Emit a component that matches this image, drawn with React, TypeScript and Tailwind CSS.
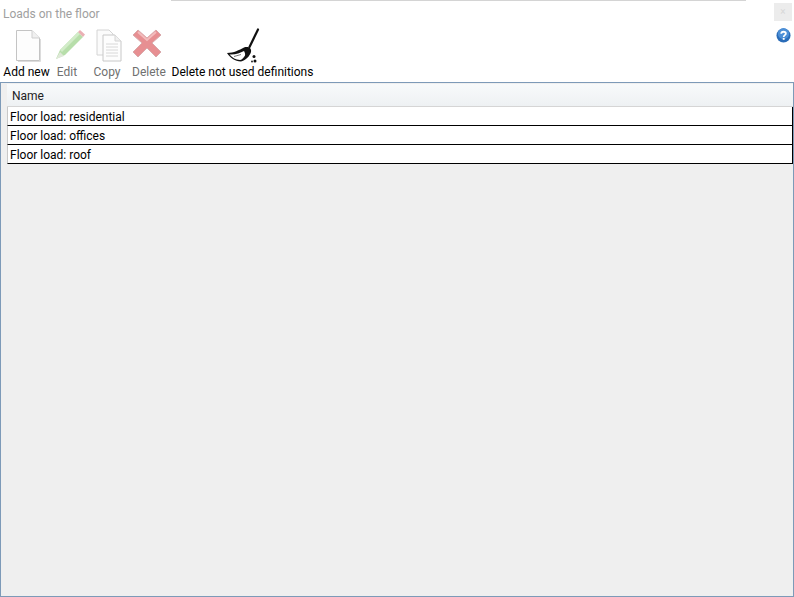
import { ReactNode } from 'react';

const rows = ['Floor load: residential', 'Floor load: offices', 'Floor load: roof'];

function ToolButton({ icon, label, muted, className }: { icon: ReactNode; label: string; muted?: boolean; className: string }) {
  return (
    <div className={`flex flex-col items-center ${className}`}>
      <div className="flex h-[37px] items-start justify-center">{icon}</div>
      <span className={`mt-[1px] whitespace-nowrap text-[12px] leading-[16px] ${muted ? 'text-[#707070]' : 'text-black'}`}>{label}</span>
    </div>
  );
}

function PageIcon() {
  return (
    <svg className="ml-[2px] mt-[3px] shrink-0" width="28" height="34" viewBox="0 0 28 34">
      <path d="M2.5 1.5H18L25.5 9V31.5H2.5Z" fill="#fdfdfd" stroke="#c4c4c4" />
      <path d="M18 1.5V9H25.5" fill="#f0f0f0" stroke="#cfcfcf" />
      <path d="M26.5 10V32.5H4" fill="none" stroke="#dcdcdc" />
    </svg>
  );
}

function PencilIcon() {
  return (
    <svg className="ml-[6px] mt-[2px] shrink-0" width="32" height="34" viewBox="0 0 32 34">
      <path d="M2 31L6 22L24 4L29 9L11 27Z" fill="#b7deaa" />
      <path d="M6 22L24 4L26 6L8 24Z" fill="#d2ecc8" />
      <path d="M2 31L6 24L10 28Z" fill="#dfe8d8" />
      <path d="M24 4L26 2L31 6.5L29 9Z" fill="#eab0b4" />
    </svg>
  );
}

function CopyIcon() {
  return (
    <svg className="ml-[4px] mt-[3px] shrink-0" width="26" height="33" viewBox="0 0 26 33">
      <path d="M1 1H13L17 5V26H1Z" fill="#fbfbfb" stroke="#d4d4d4" />
      <path d="M7 6H19L25 12V32H7Z" fill="#fdfdfd" stroke="#c8c8c8" />
      <path d="M19 6V12H25" fill="#f0f0f0" stroke="#d4d4d4" />
      <path d="M10 15H22M10 18H22M10 21H22M10 24H22M10 27H22" stroke="#d8d8d8" />
    </svg>
  );
}

function DeleteIcon() {
  return (
    <svg className="mr-[4px] mt-[2px] shrink-0" width="30" height="30" viewBox="0 0 30 30">
      <path d="M6 2L15 10L24 2L29 7L20 15L29 24L24 29L15 20L6 29L1 24L10 15L1 7Z" fill="#e78f92" stroke="#d9a9ab" strokeLinejoin="round" />
      <path d="M6 4L15 12L24 4" fill="none" stroke="#f3bcbd" strokeWidth="2" />
    </svg>
  );
}

function BroomIcon() {
  return (
    <svg className="mt-[2px] shrink-0" width="36" height="37" viewBox="0 0 36 37">
      <path d="M33 1.5L24.5 19" stroke="#111" strokeWidth="2.2" strokeLinecap="round" />
      <path d="M2 25C9 25 14 22 19 19.5C23 18 27 20 26 24C25 28 20 33 16 33.5C10 33 5 30 2 25Z" fill="#111" />
      <path d="M4.5 26.5C10 27 15 25 19 23C20 25 21 27 19 29C18 30.5 16.5 32 15 32C10.5 31.5 7.5 30 4.5 26.5Z" fill="#fff" />
      <path d="M9 28.5L16 26.5" stroke="#555" strokeWidth="0.8" />
      <circle cx="29" cy="28.5" r="1.5" fill="#111" />
      <circle cx="30" cy="33" r="1.5" fill="#111" />
      <circle cx="27" cy="33.5" r="0.9" fill="#111" />
    </svg>
  );
}

function HelpIcon() {
  return (
    <svg width="15" height="15" viewBox="0 0 16 16">
      <circle cx="8" cy="8" r="7.5" fill="#2a6cb8" />
      <circle cx="8" cy="6" r="6" fill="#4d8fd6" />
      <path d="M5.6 6.2C5.6 4.7 6.7 4 8 4C9.4 4 10.5 4.8 10.5 6C10.5 7.6 8.2 7.6 8.2 9.6" fill="none" stroke="#fff" strokeWidth="1.9" />
      <rect x="7.2" y="10.6" width="2" height="2" fill="#fff" />
    </svg>
  );
}

export default function App() {
  return (
    <div className="flex h-[597px] w-[794px] flex-col overflow-hidden bg-white font-['Roboto','Liberation_Sans',sans-serif]">
      <div className="ml-[171px] h-[1px] w-[575px] shrink-0 bg-[#d4d4d4]" />
      <div className="flex h-[81px] shrink-0">
        <div className="min-w-0 flex-1 pl-[3px]">
          <div className="h-[25px] pt-[5px] text-[12px] leading-[16px] text-[#a0a0a0]">Loads on the floor</div>
          <div className="flex">
            <ToolButton icon={<PageIcon />} label="Add new" className="w-[47px]" />
            <ToolButton icon={<PencilIcon />} label="Edit" muted className="w-[34px]" />
            <ToolButton icon={<CopyIcon />} label="Copy" muted className="ml-[5px] w-[36px]" />
            <ToolButton icon={<DeleteIcon />} label="Delete" muted className="ml-[4px] w-[40px]" />
            <ToolButton icon={<BroomIcon />} label="Delete not used definitions" className="ml-[2px] w-[143px]" />
          </div>
        </div>
        <div className="mr-[1px] flex w-[20px] flex-col items-center pt-[2px]">
          <div className="flex h-[18px] w-[18px] items-center justify-center bg-[#ececec] text-[10px] leading-none text-[#d8d8d8]">×</div>
          <div className="ml-[1px] mt-[7px]"><HelpIcon /></div>
        </div>
      </div>
      <div className="min-h-0 flex-1 border border-[#7d9ab8] bg-[#efefef] pl-[6px] pt-[1px]">
        <div className="flex h-[23px] items-center border-b border-[#d5d5d5] bg-gradient-to-b from-[#f8fafb] to-[#eef1f3] pl-[5px] pt-[1px] text-[12px] text-[#222]">Name</div>
        {rows.map(row => (
          <div key={row} className="flex h-[19px] items-center border-b border-l border-r border-b-black border-l-[#c8c8c8] border-r-black bg-white pl-[2px] pt-[1px] text-[12px] text-black">{row}</div>
        ))}
      </div>
    </div>
  );
}
